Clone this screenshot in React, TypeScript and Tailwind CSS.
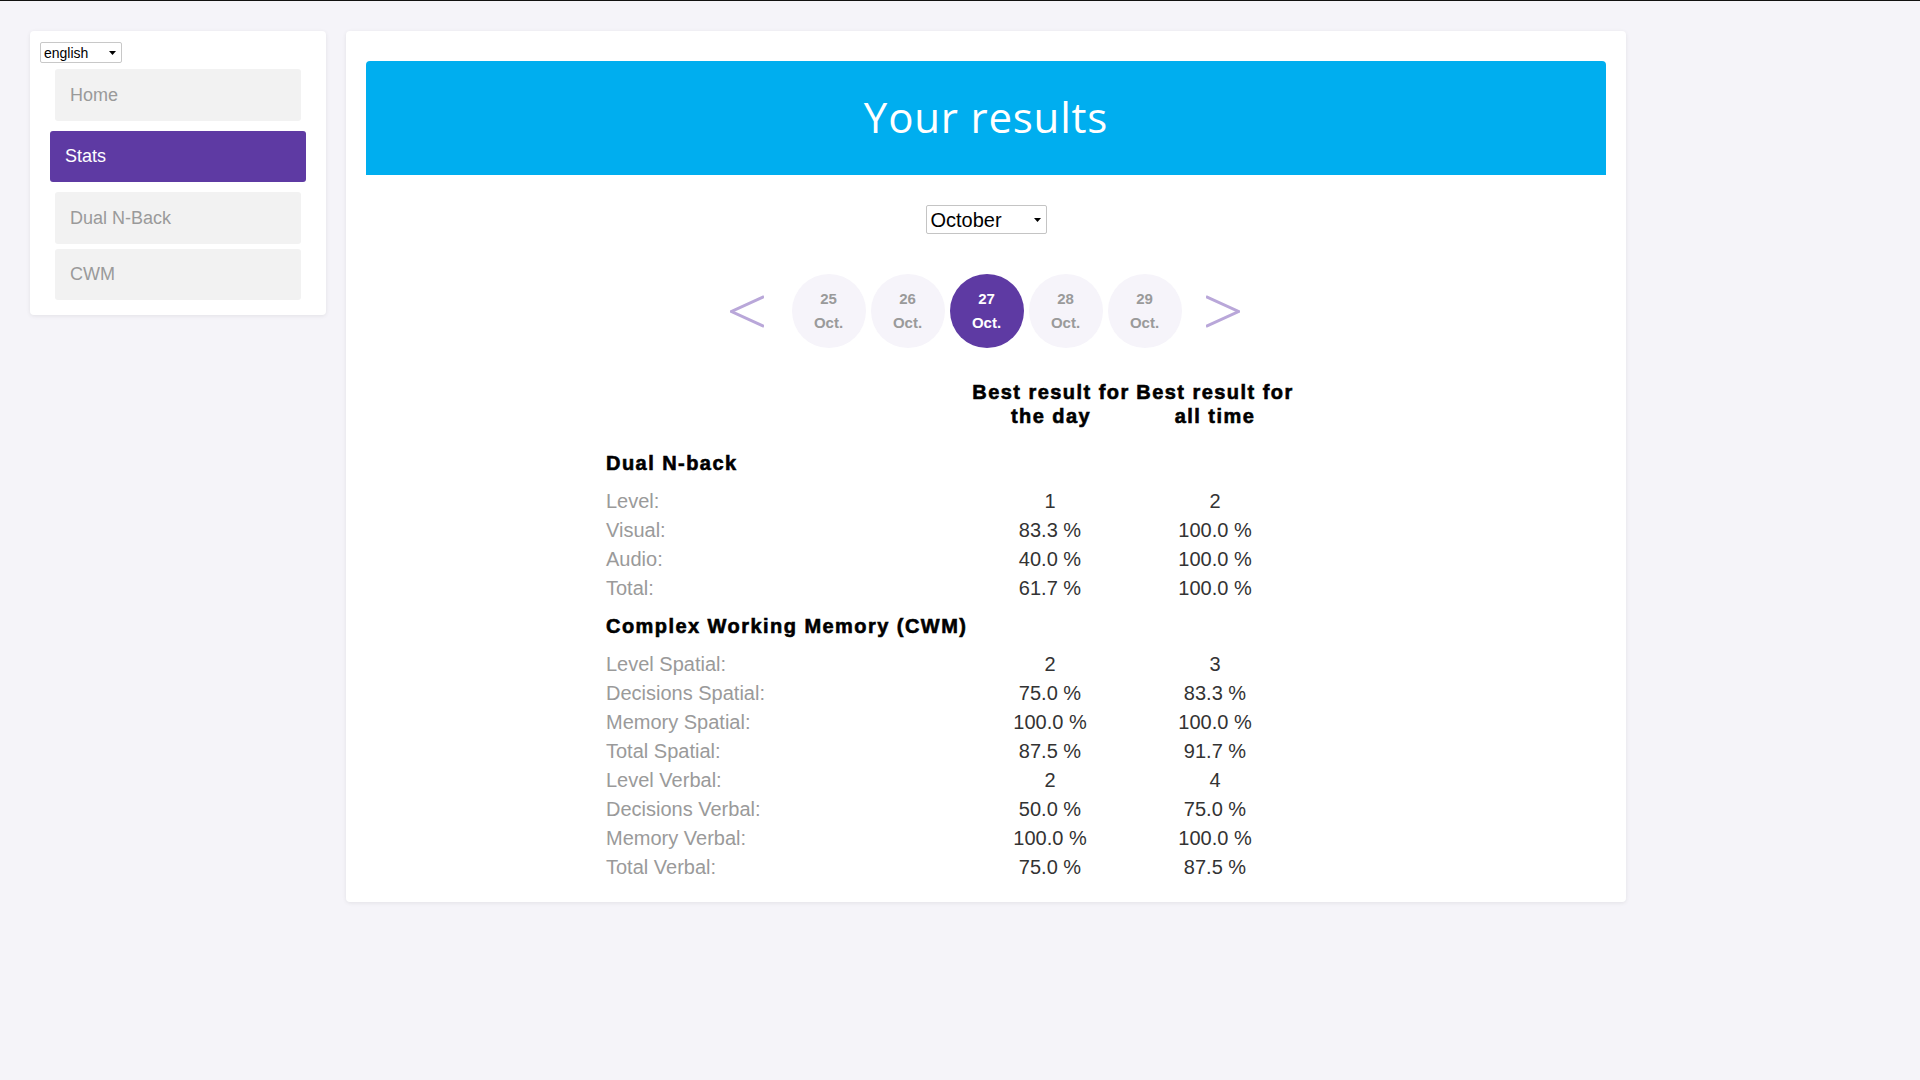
import React from "react";

const dual = [
  ["Level:", "1", "2"],
  ["Visual:", "83.3 %", "100.0 %"],
  ["Audio:", "40.0 %", "100.0 %"],
  ["Total:", "61.7 %", "100.0 %"],
];

const cwm = [
  ["Level Spatial:", "2", "3"],
  ["Decisions Spatial:", "75.0 %", "83.3 %"],
  ["Memory Spatial:", "100.0 %", "100.0 %"],
  ["Total Spatial:", "87.5 %", "91.7 %"],
  ["Level Verbal:", "2", "4"],
  ["Decisions Verbal:", "50.0 %", "75.0 %"],
  ["Memory Verbal:", "100.0 %", "100.0 %"],
  ["Total Verbal:", "75.0 %", "87.5 %"],
];

const days = ["25", "26", "27", "28", "29"];

function Caret() {
  return (
    <svg width="7" height="4" viewBox="0 0 7 4" className="shrink-0">
      <path d="M0 0 H7 L3.5 4 Z" fill="#000" />
    </svg>
  );
}

function Rows({ rows }: { rows: string[][] }) {
  return (
    <>
      {rows.map((r) => (
        <div key={r[0]} className="grid grid-cols-[367px_164px_164px] h-[29px] leading-[29px] text-[20px]">
          <div className="pl-[4px] text-[#9a9a9a] whitespace-nowrap">{r[0]}</div>
          <div className="text-center text-[#333] pr-[2px]">{r[1]}</div>
          <div className="text-center text-[#333]">{r[2]}</div>
        </div>
      ))}
    </>
  );
}

export default function App() {
  return (
    <div className="min-h-screen bg-[#f5f4f9] border-t border-[#111] font-['Liberation_Sans',Arial,sans-serif] flex items-start gap-[20px] pl-[30px] pt-[30px]">
      {/* Sidebar */}
      <aside className="w-[296px] bg-white rounded-[4px] shadow-[0_1px_4px_rgba(0,0,0,0.08)] pt-[11px] pb-[15px] px-[10px] flex flex-col items-start">
        <div className="w-[82px] h-[21px] border border-[#c8c8c8] rounded-[2px] bg-white flex items-center justify-between pl-[3px] pr-[5px] text-[14px] text-black leading-none">
          <span>english</span>
          <Caret />
        </div>
        <div className="mt-[6px] ml-[15px] w-[246px] h-[52px] rounded-[3px] bg-[#f2f2f2] flex items-center pl-[15px] text-[18px] text-[#9a9a9a]">
          Home
        </div>
        <div className="mt-[10px] ml-[10px] w-[256px] h-[51px] rounded-[3px] bg-[#5e3aa3] flex items-center pl-[15px] text-[18px] text-white">
          Stats
        </div>
        <div className="mt-[10px] ml-[15px] w-[246px] h-[52px] rounded-[3px] bg-[#f2f2f2] flex items-center pl-[15px] text-[18px] text-[#9a9a9a]">
          Dual N-Back
        </div>
        <div className="mt-[5px] ml-[15px] w-[246px] h-[51px] rounded-[3px] bg-[#f2f2f2] flex items-center pl-[15px] text-[18px] text-[#9a9a9a]">
          CWM
        </div>
      </aside>

      {/* Main */}
      <main className="w-[1280px] bg-white rounded-[4px] shadow-[0_1px_4px_rgba(0,0,0,0.08)] px-[20px] pt-[30px] pb-[20px]">
        <div className="h-[114px] bg-[#00aeef] rounded-t-[4px] flex items-center justify-center">
          <h1 className="font-['Open_Sans',sans-serif] text-[42px] text-white font-normal leading-none tracking-[0.8px] -translate-y-[1px]">
            Your results
          </h1>
        </div>

        <div className="mt-[30px] flex justify-center">
          <div className="w-[121px] h-[29px] border border-[#c4c4c4] rounded-[2px] flex items-center justify-between pl-[4px] pr-[5px] text-[20px] text-black leading-none">
            <span>October</span>
            <Caret />
          </div>
        </div>

        <div className="mt-[40px] h-[74px] flex items-center justify-center pr-[3px]">
          <svg width="34" height="33" viewBox="0 0 34 33" className="mr-[28px]">
            <polyline points="34,1.5 1.5,16.5 34,31.5" fill="none" stroke="#b9a7d9" strokeWidth="3" />
          </svg>
          <div className="flex gap-[5px]">
            {days.map((d) => {
              const active = d === "27";
              return (
                <div
                  key={d}
                  className={
                    active
                      ? "w-[74px] h-[74px] rounded-full bg-[#5e3aa3] text-white flex flex-col items-center justify-center text-[15px] font-bold leading-[24px]"
                      : "w-[74px] h-[74px] rounded-full bg-[#f6f4fa] text-[#9a9a9a] flex flex-col items-center justify-center text-[15px] font-bold leading-[24px]"
                  }
                >
                  <span>{d}</span>
                  <span>Oct.</span>
                </div>
              );
            })}
          </div>
          <svg width="34" height="33" viewBox="0 0 34 33" className="ml-[24px]">
            <polyline points="0,1.5 32.5,16.5 0,31.5" fill="none" stroke="#b9a7d9" strokeWidth="3" />
          </svg>
        </div>

        <div className="mt-[32px] ml-[236px] w-[695px]">
          <div className="grid grid-cols-[367px_164px_164px] text-[20px] font-bold leading-[24px] tracking-[1.45px] [-webkit-text-stroke:0.6px_#000] text-black">
            <div />
            <div className="text-center whitespace-nowrap">
              Best result for
              <br />
              the day
            </div>
            <div className="text-center whitespace-nowrap">
              Best result for
              <br />
              all time
            </div>
          </div>

          <div className="mt-[21px] mb-[9px] pl-[4px] text-[20px] font-bold leading-[29px] tracking-[1.45px] [-webkit-text-stroke:0.6px_#000] text-black">
            Dual N-back
          </div>
          <Rows rows={dual} />

          <div className="mt-[9px] mb-[9px] pl-[4px] text-[20px] font-bold leading-[29px] tracking-[1.45px] [-webkit-text-stroke:0.6px_#000] text-black whitespace-nowrap">
            Complex Working Memory (CWM)
          </div>
          <Rows rows={cwm} />
        </div>
      </main>
    </div>
  );
}
